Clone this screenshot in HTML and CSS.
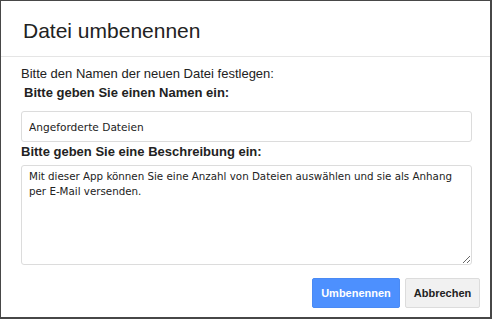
FILE: index.html
```html
<!DOCTYPE html>
<html lang="de">
<head>
    <meta charset="UTF-8">
    <title>Datei umbenennen</title>
    <link rel="stylesheet" href="styles.css">
</head>
<body>
    <div class="dialog">
        <header class="dialog-title">
            <h1>Datei umbenennen</h1>
        </header>
        <div class="dialog-body">
            <p class="intro">Bitte den Namen der neuen Datei festlegen:</p>
            <label class="field-label first" for="name">Bitte geben Sie einen Namen ein:</label>
            <input class="field" id="name" type="text" value="Angeforderte Dateien">
            <label class="field-label" for="desc">Bitte geben Sie eine Beschreibung ein:</label>
            <textarea class="field area" id="desc">Mit dieser App können Sie eine Anzahl von Dateien auswählen und sie als Anhang per E-Mail versenden.</textarea>
        </div>
        <footer class="dialog-buttons">
            <button class="btn primary">Umbenennen</button>
            <button class="btn">Abbrechen</button>
        </footer>
    </div>
</body>
</html>
```

FILE: styles.css
```css
body, html {
    margin: 0;
    padding: 0;
    background: #fff;
    font-family: Arial, "Liberation Sans", sans-serif;
}

.dialog {
    box-sizing: border-box;
    width: 492px;
    height: 319px;
    border: 1px solid #474747;
    border-right-width: 2px;
    border-bottom-width: 2px;
    background: #fff;
}

.dialog-title {
    height: 55px;
    border-bottom: 1px solid #e5e5e5;
    padding: 0 22px;
    display: flex;
    align-items: center;
}

h1 {
    margin: 0;
    padding-top: 4px;
    font-size: 21px;
    font-weight: normal;
    color: #222;
}

.dialog-body {
    padding: 9px 20px 0 20px;
    display: flex;
    flex-direction: column;
}

.intro {
    margin: 0;
    font-size: 13px;
    line-height: 16px;
    color: #222;
}

.field-label {
    margin-top: 2px;
    font-size: 13px;
    line-height: 16px;
    font-weight: bold;
    color: #222;
}

.field-label.first {
    padding-left: 3px;
    margin-top: 3px;
}

.field {
    box-sizing: border-box;
    width: 451px;
    height: 31px;
    margin: 10px 0 0 0;
    padding: 0 7px;
    border: 1px solid #dcdcdc;
    border-radius: 3px;
    font-family: "DejaVu Sans", sans-serif;
    font-size: 10.6px;
    color: #222;
    outline: none;
}

.area {
    height: 100px;
    margin: 5px 0 0 0;
    padding: 3px 7px;
    font-size: 10.3px;
    line-height: 15px;
    resize: vertical;
}

.dialog-buttons {
    display: flex;
    justify-content: flex-end;
    gap: 5px;
    padding: 13px 10px 0 0;
}

.btn {
    box-sizing: border-box;
    width: 75px;
    height: 30px;
    padding: 0;
    border: 1px solid #dcdcdc;
    border-radius: 2px;
    background: #f1f1f1;
    font-family: Arial, "Liberation Sans", sans-serif;
    font-size: 11px;
    font-weight: bold;
    color: #222;
}

.btn.primary {
    width: 88px;
    border-color: #4a8af4;
    background: #4d90fe;
    color: #fff;
}
```
